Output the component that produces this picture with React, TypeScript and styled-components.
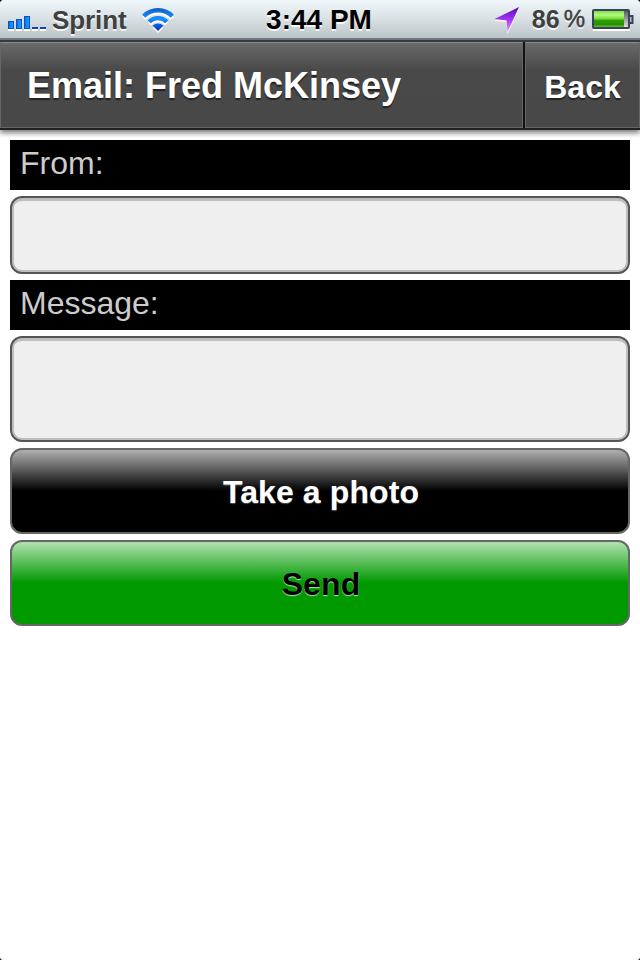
import React, { useState } from "react";
import styled, { createGlobalStyle } from "styled-components";

const GlobalStyle = createGlobalStyle`
  * {
    box-sizing: border-box;
  }
  html {
    background: #000;
  }
  body {
    margin: 0;
    font-family: "Liberation Sans", Arial, Helvetica, sans-serif;
    font-kerning: none;
  }
`;

const SignalIcon = () => (
  <svg width="40" height="22" viewBox="0 0 40 22">
    <defs>
      <linearGradient id="signal" x1="0" y1="0" x2="1" y2="0">
        <stop offset="0" stopColor="#0a6df0" />
        <stop offset="1" stopColor="#1fa4ff" />
      </linearGradient>
    </defs>
    <g fill="#fff">
      <rect x="0" y="20" width="6" height="2" />
      <rect x="8" y="20" width="6" height="2" />
      <rect x="16" y="20" width="6" height="2" />
      <rect x="24" y="20" width="6" height="2" />
      <rect x="32" y="20" width="6" height="2" />
    </g>
    <g fill="url(#signal)" stroke="#0b50c4">
      <rect x="0.5" y="12.5" width="5" height="7" />
      <rect x="8.5" y="10.5" width="5" height="9" />
      <rect x="16.5" y="7.5" width="5" height="12" />
    </g>
    <rect x="24" y="18" width="6" height="2" fill="#0b45c0" />
    <rect x="32" y="18" width="6" height="2" fill="#0b45c0" />
  </svg>
);

const WifiIcon = () => (
  <svg width="34" height="26" viewBox="0 0 34 26">
    <defs>
      <linearGradient id="wifi" gradientUnits="userSpaceOnUse" x1="0" y1="0" x2="0" y2="24">
        <stop offset="0" stopColor="#0d4cad" />
        <stop offset="0.2" stopColor="#1272e0" />
        <stop offset="0.5" stopColor="#1590ff" />
        <stop offset="0.75" stopColor="#0c5ce0" />
        <stop offset="1" stopColor="#0636b4" />
      </linearGradient>
    </defs>
    <g fill="none" stroke="#fff" strokeWidth="4.4" transform="translate(0 2)">
      <path d="M2.7 9.2A20.2 20.2 0 0 1 31.3 9.2" />
      <path d="M8.2 14.7A12.5 12.5 0 0 1 25.8 14.7" />
      <path d="M11.7 18.7A7.4 7.4 0 0 1 22.3 18.7L17 24Z" fill="#fff" stroke="none" />
    </g>
    <g fill="none" stroke="url(#wifi)" strokeWidth="4.4">
      <path d="M2.7 9.2A20.2 20.2 0 0 1 31.3 9.2" />
      <path d="M8.2 14.7A12.5 12.5 0 0 1 25.8 14.7" />
      <path d="M11.7 18.7A7.4 7.4 0 0 1 22.3 18.7L17 24Z" fill="url(#wifi)" stroke="none" />
    </g>
  </svg>
);

const LocationIcon = () => (
  <svg width="26" height="28" viewBox="0 0 26 28">
    <defs>
      <linearGradient id="location" x1="0" y1="0" x2="0" y2="1">
        <stop offset="0" stopColor="#5a00c0" />
        <stop offset="0.5" stopColor="#a437f5" />
        <stop offset="1" stopColor="#e29cff" />
      </linearGradient>
    </defs>
    <path d="M25 3L0.5 15L12.5 16L13.5 28Z" fill="#fff" />
    <path d="M25 1L0.5 13L12.5 14.5L13.5 26Z" fill="url(#location)" />
  </svg>
);

const BatteryIcon = () => (
  <svg width="43" height="22" viewBox="0 0 43 22">
    <defs>
      <linearGradient id="charge" x1="0" y1="0" x2="0" y2="1">
        <stop offset="0" stopColor="#7be04a" />
        <stop offset="0.25" stopColor="#b5fa80" />
        <stop offset="0.48" stopColor="#78dc35" />
        <stop offset="0.6" stopColor="#2f9c08" />
        <stop offset="0.85" stopColor="#279000" />
        <stop offset="1" stopColor="#64c62e" />
      </linearGradient>
      <linearGradient id="empty" x1="0" y1="0" x2="0" y2="1">
        <stop offset="0" stopColor="#555" />
        <stop offset="1" stopColor="#e4e4e4" />
      </linearGradient>
    </defs>
    <rect x="1" y="20" width="37" height="2" fill="#fff" />
    <rect x="1" y="1" width="36" height="18" rx="1" fill="url(#empty)" stroke="#3a4258" strokeWidth="2" />
    <rect x="2" y="2" width="30" height="16" fill="url(#charge)" />
    <path d="M38 7H40.5V14H38" fill="#b8bcc4" stroke="#3a4258" strokeWidth="2" />
  </svg>
);

const Email = () => {
  const [from, setFrom] = useState("");
  const [message, setMessage] = useState("");

  return (
    <>
      <GlobalStyle />
      <Screen>
        <StatusBar>
          <StatusSide>
            <SignalIcon />
            <Carrier>Sprint</Carrier>
            <WifiIcon />
          </StatusSide>
          <Clock>3:44 PM</Clock>
          <StatusSide $end>
            <LocationIcon />
            <Percent>
              86<small>%</small>
            </Percent>
            <BatteryIcon />
          </StatusSide>
        </StatusBar>
        <Header>
          <Title>Email: Fred McKinsey</Title>
          <BackButton>Back</BackButton>
        </Header>
        <Form onSubmit={(e) => e.preventDefault()}>
          <Label htmlFor="from">From:</Label>
          <Input id="from" value={from} onChange={(e) => setFrom(e.target.value)} />
          <Label htmlFor="message">Message:</Label>
          <TextArea id="message" value={message} onChange={(e) => setMessage(e.target.value)} />
          <Button type="button" $color="#000" $top="#b0b0b0" $text="#fff" $shadow="#555">
            Take a photo
          </Button>
          <Button type="submit" $color="#090" $top="#b0e2b0" $text="#000" $shadow="#b4dfb4">
            Send
          </Button>
        </Form>
      </Screen>
    </>
  );
};

const Screen = styled.div`
  display: flex;
  flex-direction: column;
  width: 640px;
  height: 960px;
  overflow: hidden;
  background: #fff;
  border-radius: 4px 4px 3px 3px;
`;

const StatusBar = styled.div`
  display: grid;
  grid-template-columns: 1fr auto 1fr;
  z-index: 1;
  height: 40px;
  padding: 0 5px 0 8px;
  background: linear-gradient(#f0f7fa, #dbe3e7 45%, #bcc4c8);
  border-bottom: 2px solid #6c7985;
  font-size: 26px;
  font-weight: bold;
  line-height: 40px;
  color: #404040;
  text-shadow: 0 2px 0 rgba(255, 255, 255, 0.8);
  position: relative;
`;

const StatusSide = styled.div<{ $end?: boolean }>`
  display: flex;
  align-items: center;
  height: 38px;
  justify-content: ${({ $end }) => ($end ? "flex-end" : "flex-start")};

  svg {
    flex: none;
    margin-top: 2px;
  }
`;

const Carrier = styled.span`
  margin: 1px 14px 0 4px;
  letter-spacing: -0.1px;
`;

const Clock = styled.span`
  margin: 0 5px 0 0;
  font-size: 28px;
  line-height: 39px;
  color: #000;
`;

const Percent = styled.span`
  display: flex;
  margin: 0 7px 0 12px;
  font-size: 25px;

  small {
    margin-left: 4px;
    font-size: 24px;
    font-weight: normal;
    -webkit-text-stroke: 0.5px #404040;
  }
`;

const Header = styled.header`
  display: flex;
  flex: none;
  height: 90px;
  border-top: 2px solid #38393b;
  border-bottom: 2px solid #222;
  background: #111;
  box-shadow: 0 3px 5px rgba(0, 0, 0, 0.5);
  color: #fff;
  text-shadow: 0 2px 1px #222;
`;

const headerPart = `
  border: 1px solid #666;
  border-top-color: #8a8a8a;
  background: linear-gradient(#696969, #494949 32%, #484848);
`;

const Title = styled.h1`
  ${headerPart}
  flex: 1;
  margin: 0 2px 0 0;
  padding-left: 26px;
  font-size: 36px;
  line-height: 85px;
`;

const BackButton = styled.button`
  ${headerPart}
  width: 115px;
  padding: 4px 0 0;
  color: inherit;
  font: bold 32px "Liberation Sans", Arial, sans-serif;
  text-shadow: inherit;
`;

const Form = styled.form`
  display: flex;
  flex-direction: column;
  gap: 6px;
  padding: 10px;
`;

const Label = styled.label`
  height: 50px;
  padding-left: 10px;
  background: #000;
  color: #ccc;
  font-size: 32px;
  line-height: 46px;
`;

const fieldStyle = `
  display: block;
  width: 100%;
  margin: 0;
  padding: 8px;
  border: 2px solid #555;
  border-radius: 12px;
  outline: none;
  background: #efefef;
  box-shadow: inset 0 3px 0 #bebebe, inset 0 0 0 2px #bebebe;
  font: 32px "Liberation Sans", Arial, sans-serif;
`;

const Input = styled.input`
  ${fieldStyle}
  height: 78px;
`;

const TextArea = styled.textarea`
  ${fieldStyle}
  height: 106px;
  resize: none;
`;

const Button = styled.button<{ $color: string; $top: string; $text: string; $shadow: string }>`
  height: 86px;
  padding: 3px 0 0 2px;
  border: 2px solid #666;
  border-radius: 12px;
  background: linear-gradient(${({ $top, $color }) => `${$top}, ${$color} 50%`});
  color: ${({ $text }) => $text};
  font: bold 32px "Liberation Sans", Arial, sans-serif;
  letter-spacing: 0.1px;
  text-shadow: 0 1px 1px ${({ $shadow }) => $shadow};
`;

export default Email;
